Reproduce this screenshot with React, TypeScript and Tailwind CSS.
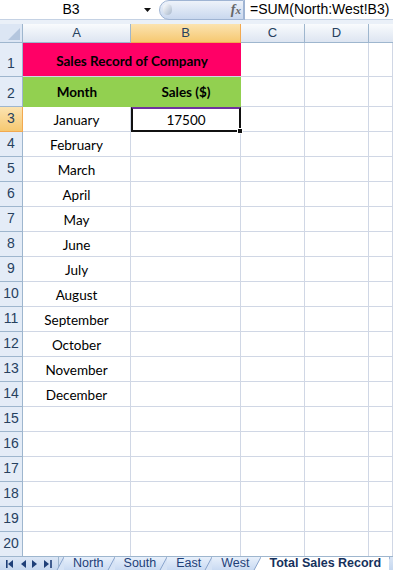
const months = [
  'January', 'February', 'March', 'April', 'May', 'June',
  'July', 'August', 'September', 'October', 'November', 'December',
]

function RowHead({ n, active }: { n: number; active?: boolean }) {
  return (
    <div
      className={
        'w-[23px] shrink-0 flex items-end justify-center pb-[2px] border-r border-b text-[14px] text-[#27415f] ' +
        (active
          ? 'bg-gradient-to-b from-[#fbe3b0] to-[#f6c870] border-[#f2a950]'
          : 'bg-[#e4ecf7] border-[#9eb6ce]')
      }
      style={{ fontFamily: '"Liberation Sans", Arial, sans-serif' }}
    >
      {n}
    </div>
  )
}

function Cell({ className = '', children }: { className?: string; children?: React.ReactNode }) {
  return (
    <div className={'shrink-0 border-r border-b border-[#d0d7e5] flex items-center justify-center ' + className}>
      {children}
    </div>
  )
}

function Tab({ label, active }: { label: string; active?: boolean }) {
  return (
    <div
      className={
        'relative h-full shrink-0 whitespace-nowrap flex items-center ' +
        (active ? 'bg-white font-bold text-[#16315c] z-10 pl-[10px] pr-[8px]' : 'px-[10px] bg-gradient-to-b from-[#e8f0fb] to-[#c9daf2] text-[#1e3f78]')
      }
    >
      <svg className="absolute -left-[7px] top-0" width="8" height="15" viewBox="0 0 8 15">
        <path d="M0 15 L8 0 L8 15 Z" fill={active ? '#ffffff' : '#d6e3f5'} />
        <path d="M0 15 L8 0" stroke="#8aa5cc" strokeWidth="1" fill="none" />
      </svg>
      {label}
    </div>
  )
}

export default function App() {
  return (
    <div className="w-[393px] h-[570px] overflow-hidden bg-white flex flex-col" style={{ fontFamily: 'Lato, "Liberation Sans", sans-serif' }}>
      {/* formula bar */}
      <div className="h-[20px] flex items-center border-b border-[#c5d2e4] shrink-0 text-[14px] text-black" style={{ fontFamily: '"Liberation Sans", Arial, sans-serif' }}>
        <div className="w-[142px] text-center">B3</div>
        <svg width="9" height="6" viewBox="0 0 9 6" className="ml-[1px]">
          <path d="M1 1 L8 1 L4.5 5 Z" fill="#111" />
        </svg>
        <div className="ml-[7px] w-[85px] h-[20px] rounded-l-full bg-gradient-to-b from-[#eef3fa] to-[#c9d8ee] border border-[#9fb4d3] flex items-center justify-between pl-[3px] pr-[2px]">
          <div className="w-[9px] h-[11px] rounded-full bg-gradient-to-br from-white to-[#a8b8cc]" />
          <span className="italic text-[#666] text-[14px] font-bold" style={{ fontFamily: '"Liberation Serif", serif' }}>
            f<span className="text-[11px]">x</span>
          </span>
        </div>
        <div className="w-px h-[20px] bg-[#9fb4d3]" />
        <div className="pl-[5px] whitespace-nowrap">=SUM(North:West!B3)</div>
      </div>
      <div className="h-[4px] bg-[#eaf0f8] shrink-0" />

      {/* column headers */}
      <div className="flex h-[19px] shrink-0 text-[13px] text-[#27415f]" style={{ fontFamily: '"Liberation Sans", Arial, sans-serif' }}>
        <div className="w-[23px] shrink-0 bg-[#dce6f4] border-r border-b border-[#9eb6ce] relative">
          <svg className="absolute right-[2px] bottom-[2px]" width="12" height="12" viewBox="0 0 12 12">
            <path d="M12 0 L12 12 L0 12 Z" fill="#b4c6de" />
          </svg>
        </div>
        <div className="w-[108px] shrink-0 bg-gradient-to-b from-[#f9fbfd] to-[#dde5f1] border-r border-b border-[#9eb6ce] flex items-center justify-center">A</div>
        <div className="w-[110px] shrink-0 bg-gradient-to-b from-[#fbe3b0] to-[#f6c870] border-r border-b border-[#f2a950] flex items-center justify-center">B</div>
        <div className="w-[64px] shrink-0 bg-gradient-to-b from-[#f9fbfd] to-[#dde5f1] border-r border-b border-[#9eb6ce] flex items-center justify-center">C</div>
        <div className="w-[64px] shrink-0 bg-gradient-to-b from-[#f9fbfd] to-[#dde5f1] border-r border-b border-[#9eb6ce] flex items-center justify-center">D</div>
        <div className="flex-1 bg-gradient-to-b from-[#f9fbfd] to-[#dde5f1] border-b border-[#9eb6ce]" />
      </div>

      {/* grid */}
      <div className="flex-1 overflow-hidden text-[13.5px] text-black">
        {/* row 1 */}
        <div className="flex h-[34px]">
          <RowHead n={1} />
          <div className="w-[218px] shrink-0 bg-[#ff0066] flex items-center justify-center pt-[3px] font-bold text-[13.5px] border-b border-[#d0d7e5]">
            Sales Record of Company
          </div>
          <Cell className="w-[64px]" />
          <Cell className="w-[64px]" />
          <Cell className="flex-1" />
        </div>
        {/* row 2 */}
        <div className="flex h-[30px]">
          <RowHead n={2} />
          <div className="w-[108px] shrink-0 bg-[#92d050] flex items-end justify-center pb-[5px] font-bold">Month</div>
          <div className="w-[110px] shrink-0 bg-[#92d050] flex items-end justify-center pb-[5px] font-bold">Sales ($)</div>
          <Cell className="w-[64px]" />
          <Cell className="w-[64px]" />
          <Cell className="flex-1" />
        </div>
        {months.map((m, i) => {
          const n = i + 3
          return (
            <div key={m} className="flex h-[25px]">
              <RowHead n={n} active={n === 3} />
              <Cell className="w-[108px] pt-[3px]">{m}</Cell>
              {n === 3 ? (
                <div className="relative w-[110px] shrink-0 border-2 border-[#111] border-t-[#7030a0] flex items-center justify-center pt-[2px]">
                  17500
                  <div className="absolute -right-[4px] -bottom-[4px] w-[6px] h-[6px] bg-[#111] border border-white" />
                </div>
              ) : (
                <Cell className="w-[110px]" />
              )}
              <Cell className="w-[64px]" />
              <Cell className="w-[64px]" />
              <Cell className="flex-1" />
            </div>
          )
        })}
        {[15, 16, 17, 18, 19, 20].map((n) => (
          <div key={n} className="flex h-[25px]">
            <RowHead n={n} />
            <Cell className="w-[108px]" />
            <Cell className="w-[110px]" />
            <Cell className="w-[64px]" />
            <Cell className="w-[64px]" />
            <Cell className="flex-1" />
          </div>
        ))}
      </div>

      {/* sheet tabs */}
      <div className="h-[14px] shrink-0 flex items-stretch bg-gradient-to-b from-[#dbe6f5] to-[#c5d7ef] border-t border-[#9eb6ce] text-[12.5px] leading-none overflow-hidden" style={{ fontFamily: '"Liberation Sans", Tahoma, sans-serif' }}>
        <div className="w-[59px] shrink-0 flex items-center justify-around px-[3px] border-r border-[#9eb6ce]">
          <svg width="8" height="8" viewBox="0 0 8 8"><rect x="0" y="0" width="1.6" height="8" fill="#1e3f78" /><path d="M7 0 L2 4 L7 8 Z" fill="#1e3f78" /></svg>
          <svg width="6" height="8" viewBox="0 0 6 8"><path d="M6 0 L1 4 L6 8 Z" fill="#1e3f78" /></svg>
          <svg width="6" height="8" viewBox="0 0 6 8"><path d="M0 0 L5 4 L0 8 Z" fill="#1e3f78" /></svg>
          <svg width="8" height="8" viewBox="0 0 8 8"><path d="M0 0 L5 4 L0 8 Z" fill="#1e3f78" /><rect x="6.2" y="0" width="1.6" height="8" fill="#1e3f78" /></svg>
        </div>
        <div className="flex items-stretch pl-[4px] shrink-0">
          <Tab label="North" />
          <Tab label="South" />
          <Tab label="East" />
          <Tab label="West" />
          <Tab label="Total Sales Record" active />
          <div className="relative w-[10px] shrink-0">
            <svg className="absolute -left-[7px] top-0" width="8" height="15" viewBox="0 0 8 15">
              <path d="M0 15 L8 0" stroke="#8aa5cc" strokeWidth="1" fill="none" />
            </svg>
          </div>
        </div>
      </div>
    </div>
  )
}
